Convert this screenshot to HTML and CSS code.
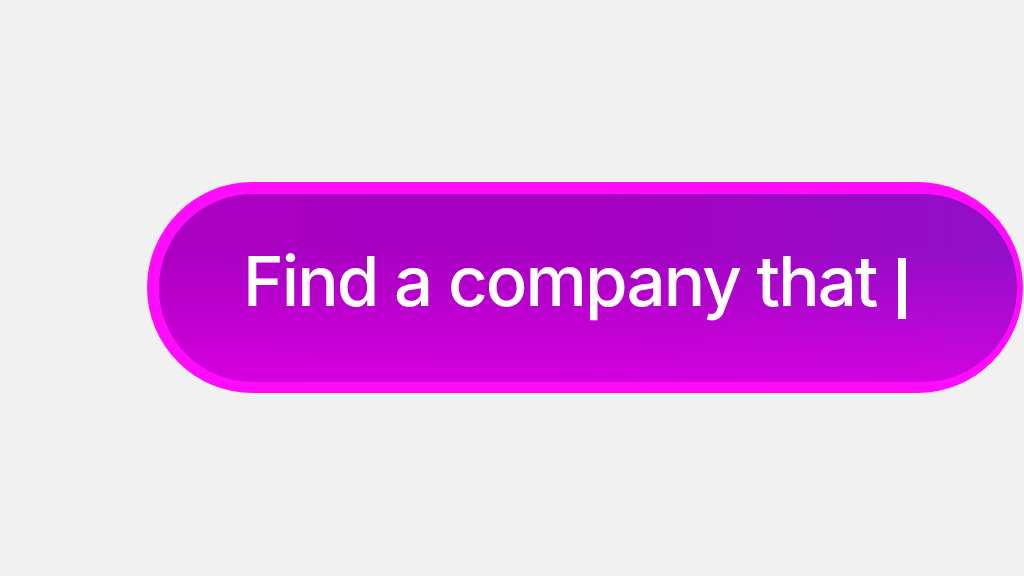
FILE: index.html
```html
<!DOCTYPE html>
<html>
<head>
<meta charset="utf-8">
<link rel="stylesheet" href="styles.css">
</head>
<body>
<div class="stage">
  <div class="pill">
    <div class="pill-inner">
      <span class="query">Find a company that</span><span class="cursor"></span>
    </div>
  </div>
</div>
</body>
</html>
```
FILE: styles.css
```css
html, body {
  margin: 0;
  padding: 0;
  background: #f1f1f1;
  width: 1024px;
  height: 576px;
  overflow: hidden;
}
.stage {
  padding-top: 182px;
  padding-left: 147px;
}
.pill {
  box-sizing: border-box;
  width: 876px;
  height: 211px;
  border-radius: 106px;
  background: #ff0cff;
  padding: 12px 6px 11px 12px;
}
.pill-inner {
  box-sizing: border-box;
  height: 100%;
  border-radius: 95px;
  background:
    linear-gradient(180deg, rgba(225,0,230,0) 0%, rgba(225,0,230,0) 30%, rgba(228,0,232,0.75) 100%),
    linear-gradient(90deg, #aa00c2 0%, #a600c2 50%, #9010c8 100%);
  display: flex;
  align-items: center;
  padding-left: 84px;
  padding-bottom: 14px;
}
.query {
  font-family: Inter, "Liberation Sans", sans-serif;
  font-size: 69px;
  font-weight: 500;
  color: #ffffff;
  letter-spacing: -1.9px;
  white-space: nowrap;
}
.cursor {
  display: inline-block;
  width: 8px;
  height: 61px;
  background: #ffffff;
  margin-left: 21px;
  margin-top: 14px;
}
```
